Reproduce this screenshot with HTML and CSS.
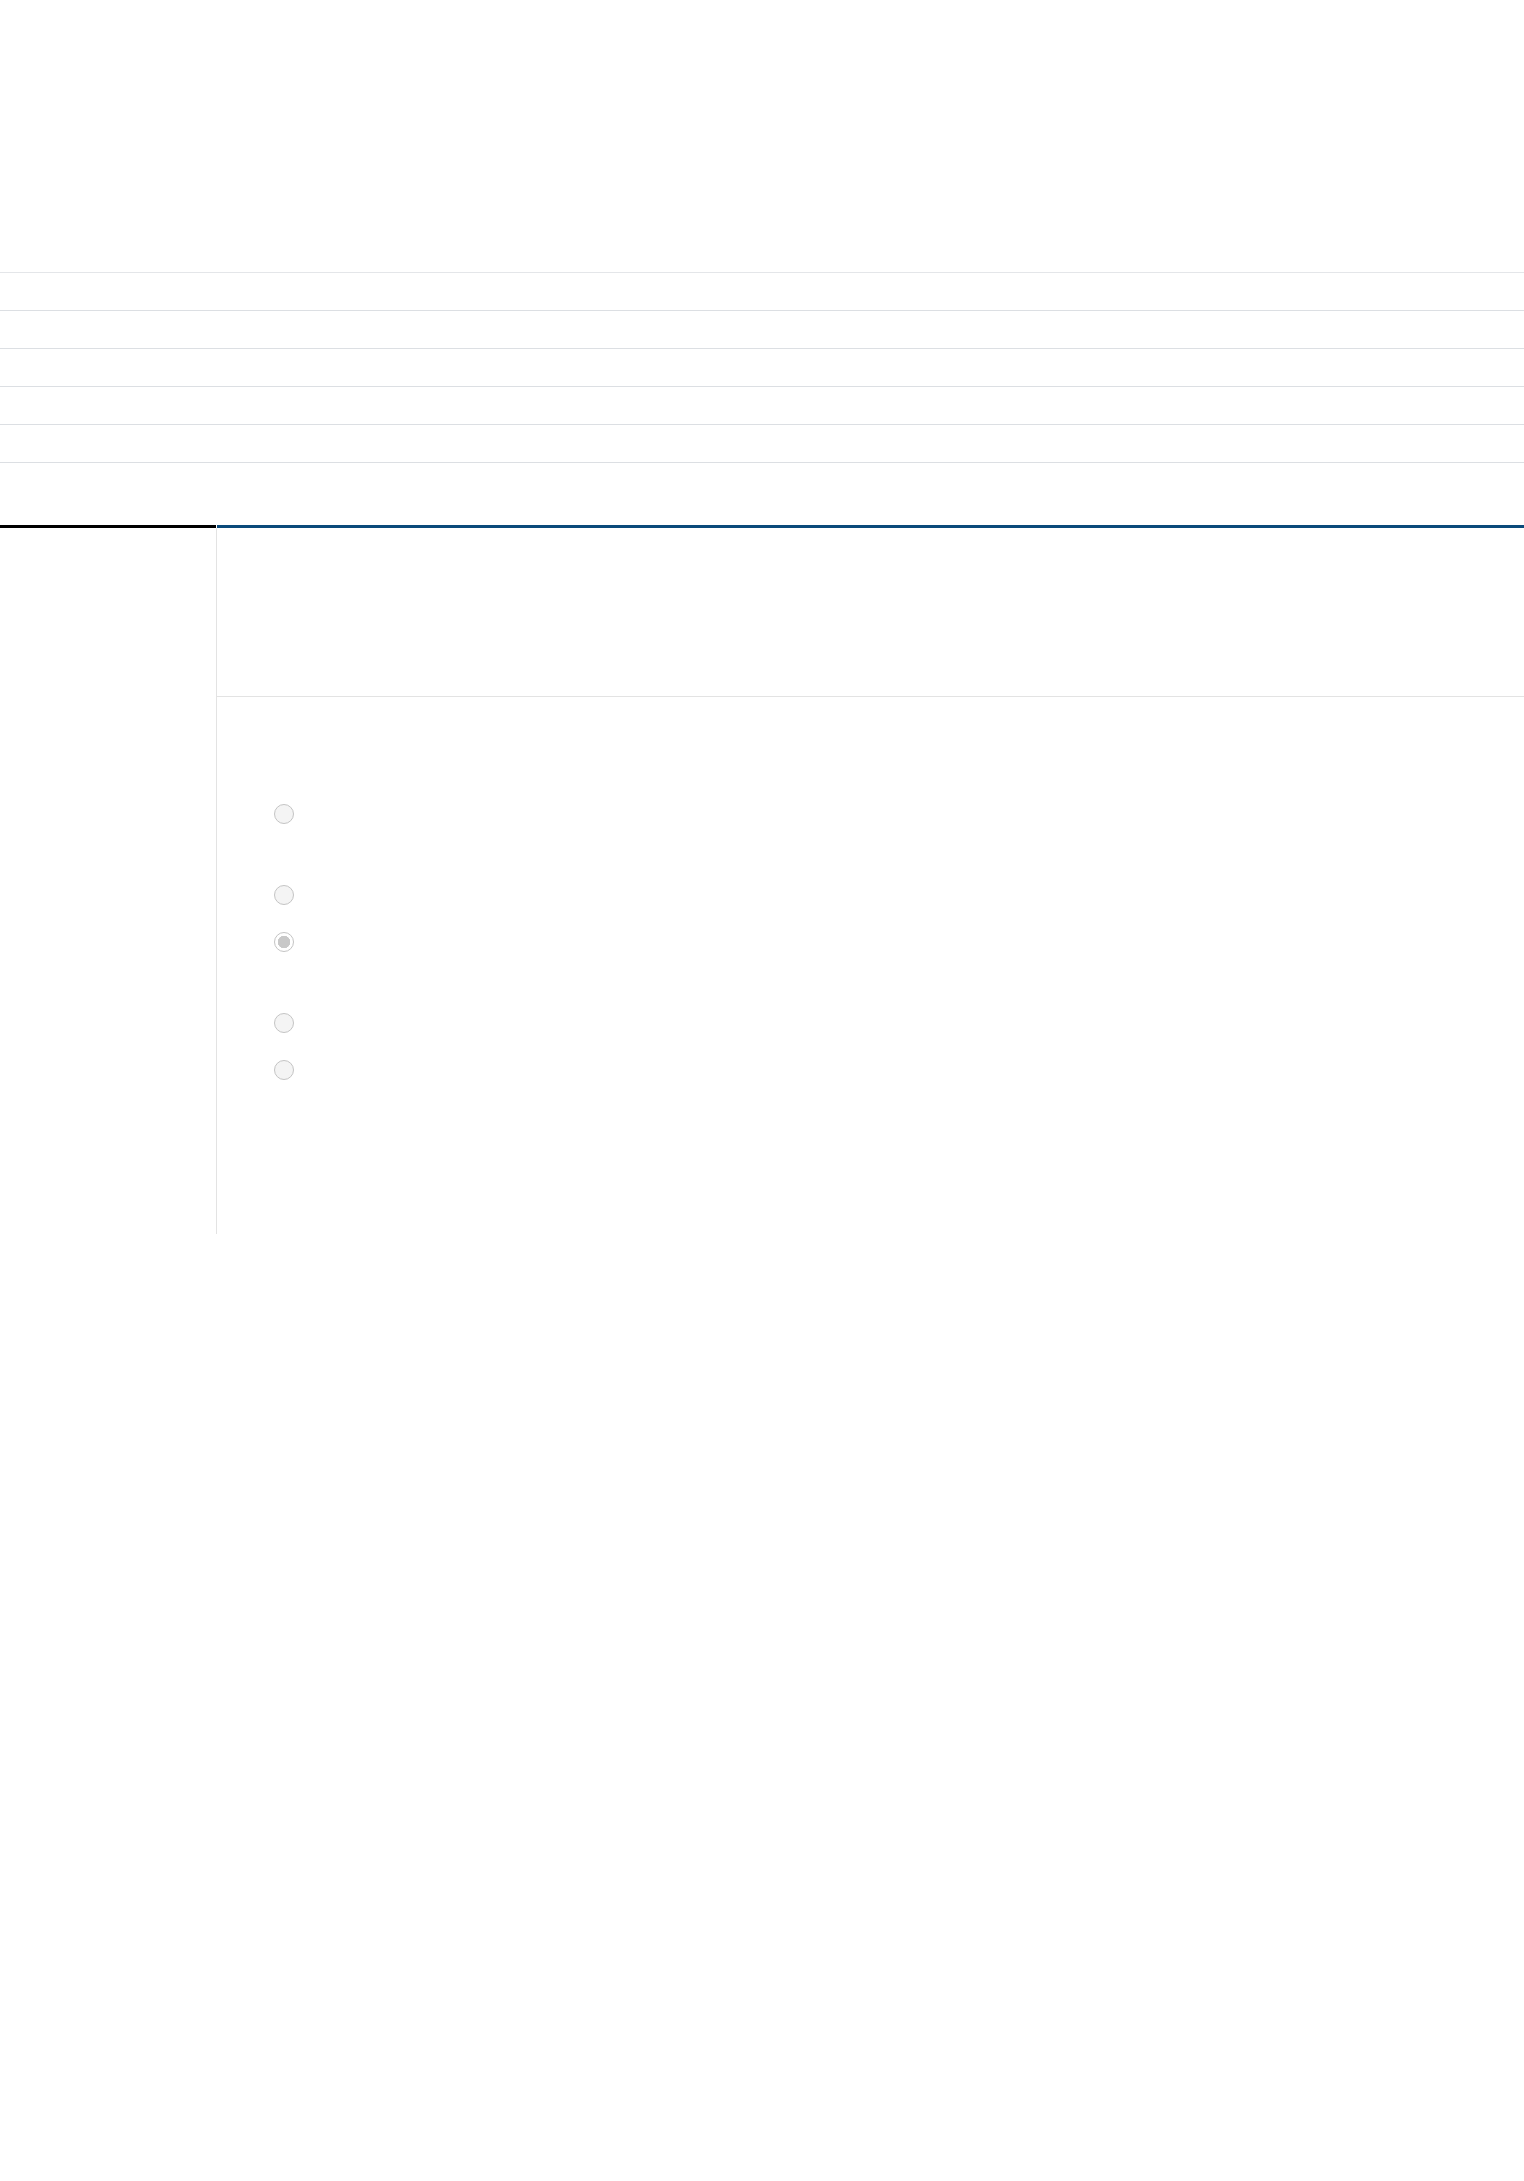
FILE: index.html
```html
<!DOCTYPE html>
<html lang="en">
<head>
<meta charset="utf-8">
<title>Settings</title>
<link rel="stylesheet" href="styles.css">
</head>
<body>
  <div class="top-space"></div>
  <div class="list">
    <div class="list-row"></div>
    <div class="list-row"></div>
    <div class="list-row"></div>
    <div class="list-row"></div>
    <div class="list-row"></div>
  </div>
  <div class="panel">
    <div class="side"></div>
    <div class="main">
      <div class="main-bar"></div>
      <div class="main-body">
        <div class="main-header"></div>
        <div class="main-content">
          <div class="option two-line"><input type="radio" name="opt" disabled><span class="opt-label"></span></div>
          <div class="option"><input type="radio" name="opt" disabled><span class="opt-label"></span></div>
          <div class="option two-line"><input type="radio" name="opt" disabled checked><span class="opt-label"></span></div>
          <div class="option"><input type="radio" name="opt" disabled><span class="opt-label"></span></div>
          <div class="option"><input type="radio" name="opt" disabled><span class="opt-label"></span></div>
        </div>
      </div>
    </div>
  </div>
</body>
</html>
```
FILE: styles.css
```css
html, body {
  margin: 0;
  padding: 0;
  background: #ffffff;
  font-family: "Liberation Sans", Arial, sans-serif;
  color: #212529;
}

.top-space {
  height: 272px;
}

.list {
  border-top: 1px solid #e4e6e9;
}

.list-row {
  height: 37.1px;
  border-bottom: 1px solid #dcdfe3;
}

.panel {
  display: flex;
  margin-top: 61.5px;
}

.side {
  width: 216px;
  flex: 0 0 216px;
  border-top: 3px solid #000000;
}

.main {
  flex: 1;
  display: flex;
  flex-direction: column;
}

.main-bar {
  height: 3px;
  margin-left: 1px;
  background: #0b4a7a;
}

.main-body {
  border-left: 1px solid #e3e3e3;
  min-height: 706px;
}

.main-header {
  height: 168px;
  border-bottom: 1px solid #e3e3e3;
}

.main-content {
  padding: 100px 0 140px 57px;
  display: flex;
  flex-direction: column;
  gap: 13px;
}

.option {
  display: flex;
  align-items: flex-start;
  gap: 12px;
  min-height: 34px;
  line-height: 34px;
}

.option.two-line {
  min-height: 68px;
}

.option input[type="radio"] {
  -webkit-appearance: none;
  appearance: none;
  box-sizing: border-box;
  width: 20px;
  height: 20px;
  margin: 7px 0 0 0;
  flex: 0 0 20px;
  border-radius: 50%;
  border: 1.5px solid #c4c4c4;
  background: #f4f4f4;
}

.option input[type="radio"]:checked {
  background: radial-gradient(circle, #c8c8c8 0 6px, #ffffff 6.5px);
}

.opt-label {
  font-size: 16px;
}
```
